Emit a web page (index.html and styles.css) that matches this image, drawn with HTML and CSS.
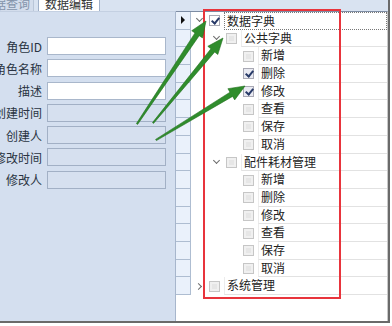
FILE: index.html
```html
<!DOCTYPE html>
<html lang="zh-CN">
<head>
    <meta charset="UTF-8">
    <title>数据编辑</title>
    <link rel="stylesheet" href="styles.css">
</head>
<body>
    <div class="window">
        <div class="tabs">
            <div class="tab tab-off">数据查询</div>
            <div class="tab tab-on">数据编辑</div>
        </div>

        <div class="main">
            <!-- 左侧表单 -->
            <div class="form">
                <div class="field"><div class="label">角色ID</div><input class="box"></div>
                <div class="field"><div class="label">角色名称</div><input class="box"></div>
                <div class="field"><div class="label">描述</div><input class="box"></div>
                <div class="field"><div class="label">创建时间</div><input class="box readonly" readonly></div>
                <div class="field"><div class="label">创建人</div><input class="box readonly" readonly></div>
                <div class="field"><div class="label">修改时间</div><input class="box readonly" readonly></div>
                <div class="field"><div class="label">修改人</div><input class="box readonly" readonly></div>
            </div>

            <!-- 行指示列 -->
            <div class="indicator">
                <div class="cell"><span class="arrow-mark"></span></div>
                <div class="cell"></div><div class="cell"></div><div class="cell"></div>
                <div class="cell"></div><div class="cell"></div><div class="cell"></div>
                <div class="cell"></div><div class="cell"></div><div class="cell"></div>
                <div class="cell"></div><div class="cell"></div><div class="cell"></div>
                <div class="cell"></div><div class="cell"></div><div class="cell"></div>
            </div>

            <!-- 权限树 -->
            <div class="tree">
                <div class="row lv0"><span class="toggle down"></span><span class="chk on white"></span><span class="text focus">数据字典</span></div>
                <div class="row lv1"><span class="toggle down"></span><span class="chk"></span><span class="text">公共字典</span></div>
                <div class="row lv2"><span class="toggle"></span><span class="chk"></span><span class="text">新增</span></div>
                <div class="row lv2"><span class="toggle"></span><span class="chk on"></span><span class="text">删除</span></div>
                <div class="row lv2"><span class="toggle"></span><span class="chk on"></span><span class="text">修改</span></div>
                <div class="row lv2"><span class="toggle"></span><span class="chk"></span><span class="text">查看</span></div>
                <div class="row lv2"><span class="toggle"></span><span class="chk"></span><span class="text">保存</span></div>
                <div class="row lv2"><span class="toggle"></span><span class="chk"></span><span class="text">取消</span></div>
                <div class="row lv1"><span class="toggle down"></span><span class="chk"></span><span class="text">配件耗材管理</span></div>
                <div class="row lv2"><span class="toggle"></span><span class="chk"></span><span class="text">新增</span></div>
                <div class="row lv2"><span class="toggle"></span><span class="chk"></span><span class="text">删除</span></div>
                <div class="row lv2"><span class="toggle"></span><span class="chk"></span><span class="text">修改</span></div>
                <div class="row lv2"><span class="toggle"></span><span class="chk"></span><span class="text">查看</span></div>
                <div class="row lv2"><span class="toggle"></span><span class="chk"></span><span class="text">保存</span></div>
                <div class="row lv2"><span class="toggle"></span><span class="chk"></span><span class="text">取消</span></div>
                <div class="row lv0"><span class="toggle right"></span><span class="chk"></span><span class="text">系统管理</span></div>
            </div>
        </div>

        <!-- 标注：红框和绿色箭头 -->
        <svg class="marks" width="392" height="326" viewBox="0 0 392 326">
            <rect x="204" y="10" width="136" height="288" fill="none" stroke="#e8343c" stroke-width="2"/>
            <g fill="#2f8d2c" stroke="#23701f" stroke-width="0.6" stroke-linejoin="round">
                <polygon points="137.6,124.4 199.2,35.7 202.5,37.9 206,21 191.7,30.7 195,32.9 136.4,123.6"/>
                <polygon points="153.5,123.4 214.7,52 217.8,54.5 223,38 207.8,46.3 210.9,48.8 152.5,122.6"/>
                <polygon points="156.4,140.6 232.6,96.4 234.7,99.9 245,86 227.9,88.7 230,92.2 155.6,139.4"/>
            </g>
        </svg>
    </div>
</body>
</html>
```

FILE: styles.css
```css
body {
    margin: 0;
    width: 392px;
    height: 326px;
    overflow: hidden;
    background: #fff;
    font-family: "Noto Sans CJK SC", "Noto Sans", sans-serif;
    font-size: 12px;
    color: #222;
}
.window {
    position: relative;
    width: 388px;
    height: 321px;
    border-right: 2px solid #6a6a6a;
    border-bottom: 2px solid #6a6a6a;
    display: flex;
    flex-direction: column;
}
.tabs {
    display: flex;
    align-items: flex-end;
    gap: 4px;
    height: 11px;
    background: #d9e3f1;
    overflow: visible;
}
.tab {
    line-height: 12px;
    padding-bottom: 1px;
    white-space: nowrap;
}
.tab-off {
    margin-left: -22px;
    padding: 0 3px 1px 4px;
    color: #8494aa;
    background: #d3ddec;
    border-right: 1px solid #b9c6d8;
}
.tab-on {
    padding: 0 6px 1px;
    background: #fff;
    border: 1px solid #9fb0c8;
    border-bottom: none;
    color: #333;
}
.main {
    flex: 1;
    display: flex;
    min-height: 0;
}
.form {
    width: 175px;
    background: #d4dfef;
    border-top: 1px solid #c4d0e2;
    border-right: 1px solid #a7b6cc;
    padding-top: 25px;
    display: flex;
    flex-direction: column;
    gap: 4.3px;
}
.field {
    display: flex;
    align-items: center;
    height: 18px;
}
.label {
    width: 42px;
    display: flex;
    justify-content: flex-end;
    white-space: nowrap;
    color: #2a3442;
    margin-right: 5px;
}
.box {
    width: 119px;
    height: 18px;
    box-sizing: border-box;
    border: 1px solid #a9b7cb;
    background: #fff;
    margin: 0;
    padding: 0 2px;
    font: inherit;
}
.box.readonly {
    background: #d6e0ef;
    border-color: #a2b0c5;
}
.indicator {
    width: 15px;
    border-top: 1px solid #7d8ca3;
    display: flex;
    flex-direction: column;
}
.cell {
    height: 17.7px;
    box-sizing: border-box;
    background: #eaf1fb;
    border-bottom: 1px solid #aebdd1;
    border-right: 1px solid #aebdd1;
    display: flex;
    align-items: center;
    justify-content: center;
}
.arrow-mark {
    width: 0;
    height: 0;
    border-top: 4px solid transparent;
    border-bottom: 4px solid transparent;
    border-left: 4px solid #111;
}
.tree {
    flex: 1;
    border-top: 1px solid #7d8ca3;
    border-right: 1px solid #c9c9c9;
    display: flex;
    flex-direction: column;
}
.row {
    height: 17.7px;
    display: flex;
    align-items: stretch;
    box-sizing: border-box;
}
.lv0 { padding-left: 3px; }
.lv1 { padding-left: 20px; }
.lv2 { padding-left: 37px; }
.toggle {
    width: 11px;
    margin-right: 4px;
    display: flex;
    align-items: center;
    justify-content: center;
}
.toggle.down::before,
.toggle.right::before {
    content: "";
    width: 4px;
    height: 4px;
    border-right: 1.5px solid #6b6b6b;
    border-bottom: 1.5px solid #6b6b6b;
}
.toggle.down::before {
    transform: translateY(-2px) rotate(45deg);
}
.toggle.right::before {
    transform: translateX(-1px) rotate(-45deg);
}
.chk {
    align-self: center;
    width: 11px;
    height: 11px;
    box-sizing: border-box;
    border: 1px solid #c6c6c6;
    background: #e6e6e6;
    box-shadow: inset 0 0 0 2px #f0f0f0;
    margin-right: 4px;
    position: relative;
}
.chk.on {
    border-color: #a9a9b4;
    background: #e9eaf2;
    box-shadow: none;
}
.chk.white {
    background: #fff;
}
.chk.on::after {
    content: "";
    position: absolute;
    left: 3px;
    top: 0;
    width: 3px;
    height: 6px;
    border-right: 2px solid #283a68;
    border-bottom: 2px solid #283a68;
    transform: rotate(40deg);
}
.text {
    flex: 1;
    padding-left: 2px;
    line-height: 16px;
    border-bottom: 1px solid #e2e2e2;
    border-left: 1px solid #ececec;
    white-space: nowrap;
    box-sizing: border-box;
}
.text.focus {
    border: 1px dotted #777;
}
.marks {
    position: absolute;
    left: 0;
    top: 0;
    pointer-events: none;
}
```
